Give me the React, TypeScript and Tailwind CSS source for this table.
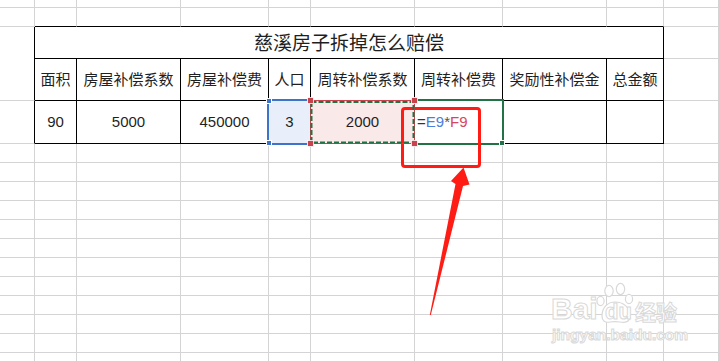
import React from 'react';

const headers = ['面积', '房屋补偿系数', '房屋补偿费', '人口', '周转补偿系数', '周转补偿费', '奖励性补偿金', '总金额'];

const grey = 'border-r border-b border-[#d4d4d4]';
const edge = 'border-r border-b border-black';

const range = (n: number) => Array.from({ length: n }, (_, i) => i);

const Paw: React.FC = () => (
  <svg width="40" height="42" viewBox="0 0 40 42" className="absolute left-[596px] top-[282px]">
    <g fill="white" stroke="#d9d9d9" strokeWidth="1.2">
      <ellipse cx="4.5" cy="19" rx="3.6" ry="4.6" />
      <ellipse cx="13" cy="9" rx="4.2" ry="5.6" />
      <ellipse cx="24.5" cy="7" rx="4.2" ry="5.6" />
      <ellipse cx="33" cy="17" rx="3.6" ry="4.6" />
      <path d="M6 34 C6 25 12 20 19 20 C27 20 34 25 34 34 C34 40 29 41 24 40 C21 39.5 17 39.5 14 40 C9 41 6 39 6 34 Z" />
    </g>
  </svg>
);

const App: React.FC = () => {
  return (
    <div className="relative w-[719px] h-[361px] overflow-hidden bg-white text-[#1f1f1f] font-['Liberation_Sans','Noto_Sans_CJK_SC',sans-serif]">
      <div className="grid grid-cols-[35px_42px_104px_88px_42px_104px_88px_104px_57px_1fr] grid-rows-[8px_19px_32px_42px_43px_repeat(12,19px)]">
        {/* top blank row */}
        {range(10).map((c) => (
          <div key={`r1-${c}`} className={grey} />
        ))}
        {/* row above the table */}
        {range(10).map((c) =>
          c >= 1 && c <= 8 ? (
            <div key={`r2-${c}`} className="border-r border-b border-r-[#d4d4d4] border-b-black" />
          ) : (
            <div key={`r2-${c}`} className={grey} />
          )
        )}

        {/* title row */}
        <div className="row-span-2 border-r border-b border-r-black border-b-[#d4d4d4]" />
        <div className={`col-span-8 flex items-center justify-center text-[19px] font-['Noto_Sans_CJK_SC',sans-serif] ${edge}`}>
          慈溪房子拆掉怎么赔偿
        </div>
        <div className={grey} />

        {/* header row */}
        {headers.map((h) => (
          <div key={h} className={`flex items-center justify-center text-[15px] font-['Noto_Sans_CJK_SC',sans-serif] ${edge}`}>
            {h}
          </div>
        ))}
        <div className={grey} />

        {/* data row */}
        <div className="border-r border-b border-r-black border-b-[#d4d4d4]" />
        <div className={`flex items-center justify-center text-[15px] ${edge}`}>90</div>
        <div className={`flex items-center justify-center text-[15px] ${edge}`}>5000</div>
        <div className={`flex items-center justify-center text-[15px] ${edge}`}>450000</div>
        <div className={`relative flex items-center justify-center text-[15px] bg-[#e8effa] ${edge}`}>
          3
          <div className="absolute -inset-[2px] border-2 border-[#3c74c9]" />
          <div className="absolute left-[-3px] top-[-3px] w-[6px] h-[6px] bg-[#3c74c9] border border-white" />
          <div className="absolute left-[-3px] bottom-[-3px] w-[6px] h-[6px] bg-[#3c74c9] border border-white" />
        </div>
        <div className={`relative flex items-center justify-center text-[15px] bg-[#f9e9e9] ${edge}`}>
          2000
          <svg width="105" height="44" className="absolute left-[-1px] top-[-1px] overflow-visible z-10">
            <rect x="0.5" y="0.5" width="104" height="43" fill="none" stroke="#c8434c" strokeWidth="1" />
            <rect x="1.5" y="2" width="102" height="40.5" fill="none" stroke="#217346" strokeWidth="2" strokeDasharray="5 2" />
            <g fill="#c8434c" stroke="white" strokeWidth="0.8">
              <rect x="-2.5" y="-2.5" width="6" height="6" />
              <rect x="-2.5" y="40.5" width="6" height="6" />
              <rect x="101.5" y="-2.5" width="6" height="6" />
              <rect x="101.5" y="40.5" width="6" height="6" />
            </g>
          </svg>
        </div>
        <div className={`relative flex items-center justify-start pl-[2px] text-[15px] ${edge}`}>
          <span className="text-[#333]">=</span>
          <span className="text-[#4a80dc]">E9</span>
          <span className="text-[#555]">*</span>
          <span className="text-[#d9455c]">F9</span>
          <div className="absolute -inset-[2px] border-t-2 border-r-2 border-b-2 border-[#217346]" />
          <div className="absolute right-[-3px] bottom-[-3px] w-[6px] h-[6px] bg-[#217346] border border-white" />
        </div>
        <div className={edge} />
        <div className={edge} />
        <div className={grey} />

        {/* empty rows below */}
        {range(12).map((r) =>
          range(10).map((c) => <div key={`b-${r}-${c}`} className={grey} />)
        )}
      </div>

      {/* annotation box */}
      <div className="absolute left-[401px] top-[107px] w-[80px] h-[61px] border-[3px] border-[#ff1c14] rounded-[4px]" />

      {/* annotation arrow */}
      <svg width="719" height="361" className="absolute left-0 top-0 pointer-events-none">
        <polygon
          points="463.5,167.5 469.5,184.5 463,186 430.8,315 429.8,315 455.5,184 451,181"
          fill="#ff1c14"
        />
      </svg>

      {/* watermark */}
      <div className="absolute left-[551px] top-[294px] text-[30px] leading-[30px] font-bold text-white [-webkit-text-stroke:1px_#d9d9d9] font-['Liberation_Sans',sans-serif]">
        Bai
      </div>
      <Paw />
      <div className="absolute left-[605px] top-[301px] text-[22px] leading-[22px] font-bold text-white [-webkit-text-stroke:1px_#d9d9d9] font-['Liberation_Sans',sans-serif]">
        du
      </div>
      <div className="absolute left-[635px] top-[299px] text-[21px] leading-[24px] font-bold text-white [-webkit-text-stroke:1px_#d9d9d9] font-['Noto_Sans_CJK_SC',sans-serif]">
        经验
      </div>
      <div className="absolute left-[552px] top-[326px] text-[15.5px] leading-[18px] font-bold text-white [-webkit-text-stroke:1px_#d9d9d9] font-['Liberation_Sans',sans-serif]">
        jingyan.baidu.com
      </div>
    </div>
  );
};

export default App;
